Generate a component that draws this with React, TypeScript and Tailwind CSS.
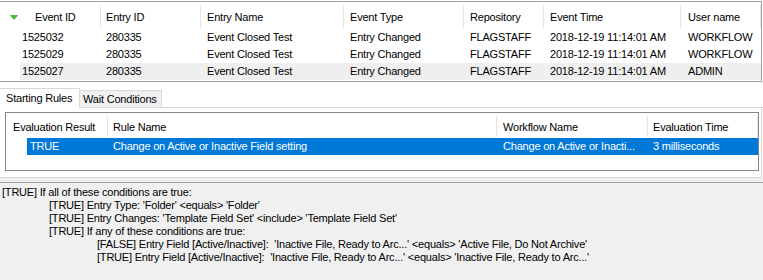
const events = [
  { id: '1525032', entry: '280335', name: 'Event Closed Test', type: 'Entry Changed', repo: 'FLAGSTAFF', time: '2018-12-19 11:14:01 AM', user: 'WORKFLOW', hot: false },
  { id: '1525029', entry: '280335', name: 'Event Closed Test', type: 'Entry Changed', repo: 'FLAGSTAFF', time: '2018-12-19 11:14:01 AM', user: 'WORKFLOW', hot: false },
  { id: '1525027', entry: '280335', name: 'Event Closed Test', type: 'Entry Changed', repo: 'FLAGSTAFF', time: '2018-12-19 11:14:01 AM', user: 'ADMIN', hot: true },
];

const details = [
  { level: 0, text: "[TRUE] If all of these conditions are true:" },
  { level: 1, text: "[TRUE] Entry Type: 'Folder' <equals> 'Folder'" },
  { level: 1, text: "[TRUE] Entry Changes: 'Template Field Set' <include> 'Template Field Set'" },
  { level: 1, text: "[TRUE] If any of these conditions are true:" },
  { level: 2, text: "[FALSE] Entry Field [Active/Inactive]:  'Inactive File, Ready to Arc...' <equals> 'Active File, Do Not Archive'" },
  { level: 2, text: "[TRUE] Entry Field [Active/Inactive]:  'Inactive File, Ready to Arc...' <equals> 'Inactive File, Ready to Arc...'" },
];

function HeaderCell({ width, label, pad = 'pl-[6px]' }: { width: string; label: string; pad?: string }) {
  return (
    <div className={`${width} flex items-stretch shrink-0`}>
      <div className={`flex-1 flex items-center pt-[3px] ${pad} whitespace-nowrap overflow-hidden`}>{label}</div>
      <div className="w-px bg-[#e5e5e5] mt-[3px] mb-[1px]" />
    </div>
  );
}

function SortArrow() {
  return (
    <svg width="8" height="5" viewBox="0 0 8 5" className="block">
      <polygon points="0.5,0.5 7.5,0.5 4,4.5" fill="#4fb83a" stroke="#2f8f25" strokeWidth="0.6" />
    </svg>
  );
}

export default function App() {
  return (
    <div className="w-[763px] h-[280px] bg-white overflow-hidden flex flex-col text-[11px] leading-[13px] tracking-[-0.2px] text-black font-['Liberation_Sans',Arial,sans-serif]">
      {/* Event list */}
      <div className="pt-px shrink-0">
        <div className="w-[762px] h-[81px] border-t border-r border-b border-[#a0a0a0] flex flex-col">
          <div className="h-[27px] flex shrink-0">
            <div className="w-[101px] flex items-stretch shrink-0">
              <div className="flex-1 flex items-center pt-[3px] pl-[10px]">
                <SortArrow />
                <span className="ml-[17px]">Event ID</span>
              </div>
              <div className="w-px bg-[#e5e5e5] mt-[3px] mb-[1px]" />
            </div>
            <HeaderCell width="w-[100px]" label="Entry ID" pad="pl-[5px]" />
            <HeaderCell width="w-[143px]" label="Entry Name" />
            <HeaderCell width="w-[120px]" label="Event Type" />
            <HeaderCell width="w-[80px]" label="Repository" />
            <HeaderCell width="w-[137px]" label="Event Time" />
            <HeaderCell width="w-[80px]" label="User name" pad="pl-[7px]" />
          </div>
          {events.map((e) => (
            <div key={e.id} className="h-[17px] flex pl-[20px] shrink-0">
              <div className={`flex-1 flex items-center ${e.hot ? 'bg-[#efefef]' : ''}`}>
                <div className="w-[81px] pl-[2px] shrink-0">{e.id}</div>
                <div className="w-[100px] pl-[5px] shrink-0">{e.entry}</div>
                <div className="w-[143px] pl-[6px] shrink-0">{e.name}</div>
                <div className="w-[120px] pl-[6px] shrink-0">{e.type}</div>
                <div className="w-[80px] pl-[6px] shrink-0">{e.repo}</div>
                <div className="w-[137px] pl-[6px] shrink-0">{e.time}</div>
                <div className="w-[80px] pl-[7px] shrink-0">{e.user}</div>
              </div>
            </div>
          ))}
        </div>
      </div>

      {/* Tabs */}
      <div className="h-[26px] flex items-end shrink-0">
        <div className="w-[80px] h-[20px] border-t border-r border-[#d9d9d9] bg-white pl-[6px] pt-[3px]">Starting Rules</div>
        <div className="w-[82px] h-[18px] border-t border-r border-b border-[#d9d9d9] bg-[#f0f0f0] pl-[3px] pt-[2px]">Wait Conditions</div>
        <div className="flex-1 h-full border-b border-[#d9d9d9]" />
      </div>

      {/* Tab page */}
      <div className="w-[762px] h-[70px] border-r border-b border-[#d9d9d9] bg-white pt-[4px] pl-[5px] shrink-0">
        <div className="w-[754px] h-[59px] border border-[#828790] flex flex-col">
          <div className="h-[25px] flex shrink-0">
            <HeaderCell width="w-[102px]" label="Evaluation Result" pad="pl-[7px]" />
            <HeaderCell width="w-[389px]" label="Rule Name" pad="pl-[5px]" />
            <HeaderCell width="w-[151px]" label="Workflow Name" />
            <HeaderCell width="w-[110px]" label="Evaluation Time" pad="pl-[5px]" />
          </div>
          <div className="h-[17px] flex pl-[21px] shrink-0">
            <div className="flex-1 flex items-center bg-[#0078d7] text-white">
              <div className="w-[81px] pl-[3px] shrink-0">TRUE</div>
              <div className="w-[389px] pl-[5px] shrink-0">Change on Active or Inactive Field setting</div>
              <div className="w-[151px] pl-[6px] shrink-0 whitespace-nowrap">Change on Active or Inacti...</div>
              <div className="w-[109px] pl-[5px] shrink-0">3 milliseconds</div>
            </div>
          </div>
        </div>
      </div>

      {/* Splitter */}
      <div className="h-[4px] bg-[#f0f0f0] shrink-0" />

      {/* Details */}
      <div className="flex-1 bg-[#f0f0f0] border-t border-[#a0a0a0] pt-[3px] pl-[2px]">
        {details.map((d, i) => (
          <div
            key={i}
            className={`h-[13px] whitespace-pre ${d.level === 1 ? 'pl-[47px]' : d.level === 2 ? 'pl-[95px]' : ''}`}
          >
            {d.text}
          </div>
        ))}
      </div>
    </div>
  );
}
